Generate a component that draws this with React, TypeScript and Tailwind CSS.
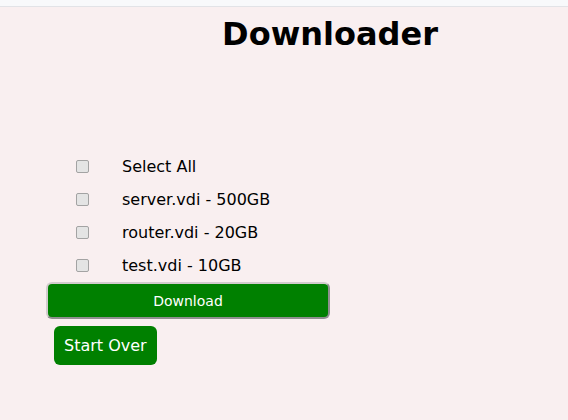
const files = ['server.vdi - 500GB', 'router.vdi - 20GB', 'test.vdi - 10GB'];

export default function App() {
  return (
    <div className="min-h-[420px] bg-[#f9eff0] font-['DejaVu_Sans',sans-serif] text-black">
      <div className="h-[7px] bg-[#f8f9fb] border-b border-[#e2e3e7]" />
      <h1 className="mt-[9px] pl-[92px] text-center text-[32px] font-bold leading-[37px]">Downloader</h1>

      <div className="mt-[97px] pl-[46px]">
        {['Select All', ...files].map((label) => (
          <label key={label} className="flex h-[33px] items-center">
            <input
              type="checkbox"
              className="ml-[30px] h-[13px] w-[13px] appearance-none rounded-[2px] border border-[#a3a3a3] bg-[#e4e4e4]"
            />
            <span className="ml-[33px] text-base">{label}</span>
          </label>
        ))}

        <button className="flex h-[37px] w-[284px] items-center justify-center rounded-[6px] border-2 border-[#d2cccd] border-r-[#8f8f8f] border-b-[#8f8f8f] bg-[#008000] text-sm text-white">
          Download
        </button>

        <button className="ml-[8px] mt-[7px] block h-[39px] rounded-[6px] bg-[#008000] px-[10px] text-base text-white">
          Start Over
        </button>
      </div>
    </div>
  );
}
